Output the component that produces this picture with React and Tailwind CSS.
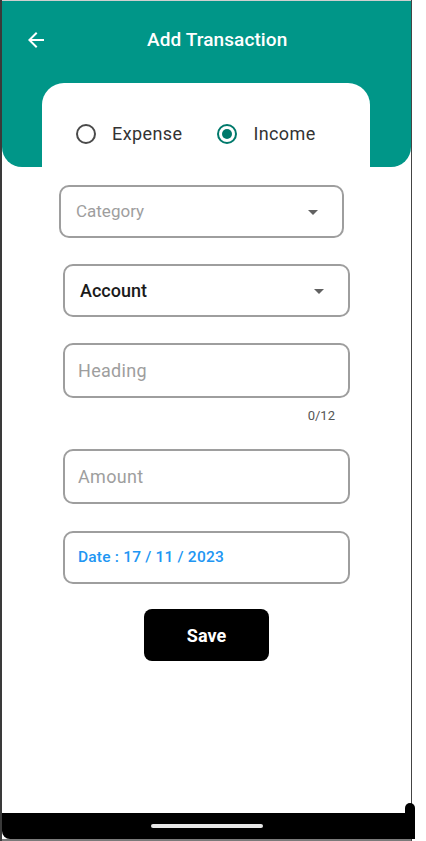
import React, { useState } from 'react';

const font = { fontFamily: 'Roboto, "Noto Sans", sans-serif' };

function DropArrow() {
  return (
    <svg width="24" height="24" viewBox="0 0 24 24" className="fill-[#616161]">
      <path d="M7 10l5 5 5-5z" />
    </svg>
  );
}

function Radio({ checked, label, onClick }) {
  return (
    <button onClick={onClick} className="flex items-center gap-[16px]">
      <span
        className={
          'w-[20px] h-[20px] rounded-full border-2 flex items-center justify-center ' +
          (checked ? 'border-[#00796b]' : 'border-[#4a4a4a]')
        }
      >
        {checked && <span className="w-[10px] h-[10px] rounded-full bg-[#00796b]" />}
      </span>
      <span className="text-[18px] text-[#333333] tracking-[0.4px]">{label}</span>
    </button>
  );
}

export default function App() {
  const [type, setType] = useState('income');

  return (
    <div className="w-[426px] h-[841px] flex bg-white overflow-hidden relative" style={font}>
      {/* left frame edge */}
      <div className="w-[2px] h-full bg-[#3a3a3a]" />

      {/* phone */}
      <div className="w-[409px] h-full flex flex-col">
        <div className="h-[1px] bg-[#cfcfcf]" />

        {/* header */}
        <div className="h-[166px] bg-[#009688] rounded-b-[20px] flex items-start">
          <div className="flex items-center w-full pt-[25px]">
            <button className="ml-[22px] w-[24px] h-[24px]">
              <svg width="24" height="24" viewBox="0 0 24 24" className="fill-white">
                <path d="M20 11H7.83l5.59-5.59L12 4l-8 8 8 8 1.41-1.41L7.83 13H20v-2z" />
              </svg>
            </button>
            <h1 className="ml-[99px] text-white text-[19px] font-medium tracking-[0.1px]">
              Add Transaction
            </h1>
          </div>
        </div>

        {/* type card */}
        <div className="-mt-[84px] ml-[40px] w-[328px] h-[84px] bg-white rounded-t-[22px] flex items-center gap-[35px] pl-[34px] pt-[17px]">
          <Radio label="Expense" checked={type === 'expense'} onClick={() => setType('expense')} />
          <Radio label="Income" checked={type === 'income'} onClick={() => setType('income')} />
        </div>

        {/* form */}
        <div className="flex flex-col">
          <div className="mt-[18px] ml-[57px] w-[285px] h-[53px] border-2 border-[#9e9e9e] rounded-[10px] flex items-center pl-[15px] pr-[17px]">
            <span className="flex-1 text-[17px] text-[#9e9e9e]">Category</span>
            <DropArrow />
          </div>

          <div className="mt-[26px] ml-[61px] w-[287px] h-[53px] border-2 border-[#9e9e9e] rounded-[10px] flex items-center pl-[15px] pr-[17px]">
            <span className="flex-1 text-[18px] text-[#1a1a1a] font-medium">Account</span>
            <DropArrow />
          </div>

          <div className="mt-[26px] ml-[61px] w-[287px] h-[55px] border-2 border-[#9e9e9e] rounded-[10px] flex items-center pl-[13px]">
            <span className="text-[18px] text-[#9e9e9e] tracking-[0.3px]">Heading</span>
          </div>
          <div className="ml-[61px] w-[272px] text-right text-[13px] text-[#555] mt-[11px] leading-[14px]">0/12</div>

          <div className="mt-[26px] ml-[61px] w-[287px] h-[55px] border-2 border-[#9e9e9e] rounded-[10px] flex items-center pl-[13px]">
            <span className="text-[18px] text-[#9e9e9e] tracking-[0.3px]">Amount</span>
          </div>

          <div className="mt-[27px] ml-[61px] w-[287px] h-[53px] border-2 border-[#9e9e9e] rounded-[10px] flex items-center pl-[13px]">
            <span className="text-[15.5px] text-[#2196f3] font-medium tracking-[0.2px]">Date : 17 / 11 / 2023</span>
          </div>

          <button className="mt-[25px] ml-[142px] w-[125px] h-[52px] bg-black rounded-[8px] text-white text-[18px] font-bold">
            Save
          </button>
        </div>

        <div className="flex-1" />

        {/* nav bar */}
        <div className="h-[26px] bg-black rounded-bl-[8px] flex items-center justify-center">
          <div className="w-[112px] h-[4px] rounded-full bg-[#e6e6e6]" />
        </div>
        <div className="h-[2px] bg-[#7a7a7a]" />
      </div>

      {/* right frame edge */}
      <div className="w-[1px] h-full bg-[#444]" />
      <div className="flex-1 bg-white" />

      {/* frame blob at bottom right */}
      <div className="absolute left-[405px] top-[803px] w-[10px] h-[36px] bg-black rounded-t-full" />
    </div>
  );
}
